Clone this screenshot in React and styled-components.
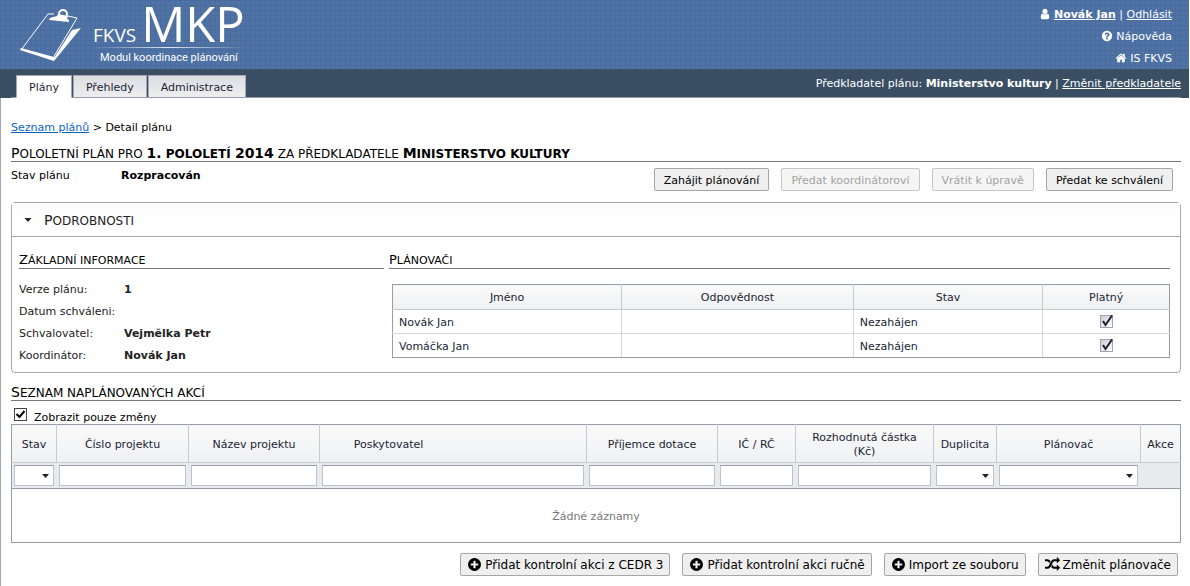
import React from 'react'
import styled, { createGlobalStyle } from 'styled-components'

const ICONS = {
  user: 'M1536 1399q0 109-62.500 187t-150.500 78h-854q-88 0-150.500-78t-62.500-187q0-85 8.500-160.500t31.500-152 58.500-131 94-89 134.500-34.500q131 128 313 128t313-128q76 0 134.500 34.500t94 89 58.500 131 31.500 152 8.500 160.500zm-256-887q0 159-112.500 271.500t-271.500 112.500-271.500-112.500-112.500-271.500 112.500-271.500 271.500-112.500 271.500 112.500 112.500 271.500z',
  help: 'M1024 1376v-192q0-14-9-23t-23-9h-192q-14 0-23 9t-9 23v192q0 14 9 23t23 9h192q14 0 23-9t9-23zm256-672q0-88-55.500-163t-138.500-116-170-41q-243 0-371 213-15 24 8 42l132 100q7 6 19 6 16 0 25-12 53-68 86-92 34-24 86-24 48 0 85.500 26t37.500 59q0 38-20 61t-68 45q-63 28-115.500 86.500t-52.500 125.500v36q0 14 9 23t23 9h192q14 0 23-9t9-23q0-19 21.500-49.500t54.500-49.500q32-18 49-28.500t46-35 44.500-48 28-60.500 12.500-81zm384 192q0 209-103 385.500t-279.500 279.500-385.500 103-385.500-103-279.500-279.500-103-385.500 103-385.500 279.500-279.500 385.500-103 385.500 103 279.500 279.500 103 385.500z',
  home: 'M1472 992v480q0 26-19 45t-45 19h-384v-384h-256v384h-384q-26 0-45-19t-19-45v-480q0-1 .5-3t.5-3l575-474 575 474q1 2 1 6zm223-69l-62 74q-8 9-21 11h-3q-13 0-21-7l-692-577-692 577q-12 8-24 7-13-2-21-11l-62-74q-8-10-7-23.500t11-21.500l719-599q32-26 76-26t76 26l244 204v-195q0-14 9-23t23-9h192q14 0 23 9t9 23v408l219 182q10 8 11 21.500t-7 23.500z',
  plus: 'M1344 960v-128q0-26-19-45t-45-19h-256v-256q0-26-19-45t-45-19h-128q-26 0-45 19t-19 45v256h-256q-26 0-45 19t-19 45v128q0 26 19 45t45 19h256v256q0 26 19 45t45 19h128q26 0 45-19t19-45v-256h256q26 0 45-19t19-45zm320-64q0 209-103 385.500t-279.500 279.500-385.500 103-385.500-103-279.500-279.500-103-385.500 103-385.500 279.500-279.500 385.500-103 385.500 103 279.500 279.500 103 385.500z',
  random: 'M666 481q-60 92-137 273-22-45-37-72.500t-40.500-63.500-51-56.500-63-35-81.500-14.500h-224q-14 0-23-9t-9-23v-192q0-14 9-23t23-9h224q250 0 410 225zm1126 799q0 14-9 23l-320 320q-9 9-23 9-13 0-22.500-9.500t-9.500-22.500v-192q-32 0-85 .5t-81 1-73-1-71-5-64-10.500-63-18.500-58-28.500-59-40-55-53.500-56-69.500q59-93 136-273 22 45 37 72.500t40.500 63.500 51 56.500 63 35 81.500 14.500h256v-192q0-14 9-23t23-9q12 0 24 10l319 319q9 9 9 23zm0-896q0 14-9 23l-320 320q-9 9-23 9-13 0-22.500-9.500t-9.500-22.500v-192h-256q-48 0-87 15t-69 45-51 61.500-45 77.500q-32 62-78 171-29 66-49.500 111t-54 105-64 100-74 83-90 68.500-106.500 42-128 16.500h-224q-14 0-23-9t-9-23v-192q0-14 9-23t23-9h224q48 0 87-15t69-45 51-61.500 45-77.500q32-62 78-171 29-66 49.500-111t54-105 64-100 74-83 90-68.500 106.500-42 128-16.500h256v-192q0-14 9-23t23-9q12 0 24 10l319 319q9 9 9 23z',
}

const Icon = ({ name, size }) => (
  <Glyph width={size} height={size} viewBox="0 0 1792 1792" aria-hidden="true">
    <path d={ICONS[name]} />
  </Glyph>
)

const Check = ({ plain, ...rest }) => (
  <CheckWrap>
    <CheckInput type="checkbox" defaultChecked $plain={plain} {...rest} />
    <CheckMark viewBox="0 0 13 13" $plain={plain}>
      <path d={plain ? 'M2.500 6 L5.500 9 L10.500 3' : 'M3 6 L5.500 10 L12 0.500'} />
    </CheckMark>
  </CheckWrap>
)

const Combo = ({ label }) => (
  <ComboWrap>
    <FilterSelect aria-label={label}>
      <option value=""></option>
    </FilterSelect>
    <Caret width="7" height="4" viewBox="0 0 7 4">
      <path d="M0 0 H7 L3.500 4 Z" />
    </Caret>
  </ComboWrap>
)

const info = [
  ['Verze plánu:', '1'],
  ['Datum schváleni:', ''],
  ['Schvalovatel:', 'Vejmělka Petr'],
  ['Koordinátor:', 'Novák Jan'],
]

const planners = ['Novák Jan', 'Vomáčka Jan']

const columns = [
  { name: 'Stav', width: 45, filter: 'select' },
  { name: 'Číslo projektu', width: 132, filter: 'text' },
  { name: 'Název projektu', width: 131, filter: 'text' },
  { name: 'Poskytovatel', filter: 'text', half: true },
  { name: 'Příjemce dotace', width: 131, filter: 'text' },
  { name: 'IČ / RČ', width: 78, filter: 'text' },
  { name: 'Rozhodnutá částka (Kč)', width: 138, filter: 'text' },
  { name: 'Duplicita', width: 63, filter: 'select' },
  { name: 'Plánovač', width: 144, filter: 'select' },
  { name: 'Akce', width: 40 },
]

const App = () => {
  return (
    <Page>
      <GlobalStyle />
      <Header>
        <Banner>
          <Logo>
            <Clipboard viewBox="0 0 64 56">
              <path
                d="M34 6 L28 6 L1 42 M48 8 L57 10 L33 50"
                fill="none"
                stroke="#fff"
                strokeWidth="1"
              />
              <path d="M1 40 L34 49 L34 53 L0 42 Z" fill="#fff" />
              <path d="M61 20 L52 22 L34 50 L34 53 Z" fill="#fff" />
              <path d="M29 12 L30 10 L37 8 L38 6 L48 8 L47 11 L49 12 L49 14 Z" fill="#fff" />
              <ellipse cx="43" cy="6" rx="4" ry="4" fill="none" stroke="#fff" strokeWidth="2" />
            </Clipboard>
            <div>
              <LogoTop>
                <LogoSmall>FKVS</LogoSmall>
                <LogoBig>MKP</LogoBig>
              </LogoTop>
              <LogoSub>Modul koordinace plánování</LogoSub>
            </div>
          </Logo>
          <UserMenu>
            <div>
              <Icon name="user" size={12} />
              <UserLink href="#profil" $bold>Novák Jan</UserLink> | <UserLink href="#odhlasit">Odhlásit</UserLink>
            </div>
            <PlainLink href="#napoveda">
              <Icon name="help" size={12} />
              Nápověda
            </PlainLink>
            <PlainLink href="#fkvs">
              <Icon name="home" size={12} />
              IS FKVS
            </PlainLink>
          </UserMenu>
        </Banner>
        <NavBar>
          <Tabs>
            <Tab href="#plany" $active>Plány</Tab>
            <Tab href="#prehledy">Přehledy</Tab>
            <Tab href="#administrace">Administrace</Tab>
          </Tabs>
          <Submitter>
            Předkladatel plánu: <b>Ministerstvo kultury</b> | <UserLink href="#zmenit">Změnit předkladatele</UserLink>
          </Submitter>
        </NavBar>
      </Header>

      <Content>
        <Breadcrumb>
          <a href="#seznam">Seznam plánů</a> &gt; Detail plánu
        </Breadcrumb>
        <Title>
          Pololetní plán pro <strong>1. pololetí <Digits>2014</Digits></strong> za předkladatele{' '}
          <strong>Ministerstvo kultury</strong>
        </Title>
        <StateRow>
          <State>
            <StateLabel>Stav plánu</StateLabel>
            <b>Rozpracován</b>
          </State>
          <TopButtons>
            <Button>Zahájit plánování</Button>
            <Button disabled>Předat koordinátorovi</Button>
            <Button disabled>Vrátit k úpravě</Button>
            <Button>Předat ke schválení</Button>
          </TopButtons>
        </StateRow>

        <Panel>
          <PanelHead>
            <Caret width="8" height="4" viewBox="0 0 7 4" $inline>
              <path d="M0 0 H7 L3.500 4 Z" />
            </Caret>
            <PanelTitle>Podrobnosti</PanelTitle>
          </PanelHead>
          <PanelBody>
            <section>
              <SubTitle>Základní informace</SubTitle>
              <InfoList>
                {info.map(([label, value]) => (
                  <React.Fragment key={label}>
                    <dt>{label}</dt>
                    <dd>{value}</dd>
                  </React.Fragment>
                ))}
              </InfoList>
            </section>
            <section>
              <SubTitle>Plánovači</SubTitle>
              <PlannerWrap>
                <PlannerTable>
                  <colgroup>
                    <Col $width="29.5%" />
                    <Col $width="29.8%" />
                    <Col $width="24.4%" />
                    <Col />
                  </colgroup>
                  <thead>
                    <tr>
                      <th>Jméno</th>
                      <th>Odpovědnost</th>
                      <th>Stav</th>
                      <th>Platný</th>
                    </tr>
                  </thead>
                  <tbody>
                    {planners.map((name) => (
                      <tr key={name}>
                        <td>{name}</td>
                        <td></td>
                        <td>Nezahájen</td>
                        <CenterCell>
                          <Check aria-label={`Platný ${name}`} />
                        </CenterCell>
                      </tr>
                    ))}
                  </tbody>
                </PlannerTable>
              </PlannerWrap>
            </section>
          </PanelBody>
        </Panel>

        <ListTitle>Seznam naplánovaných akcí</ListTitle>
        <OnlyChanges>
          <Check plain id="zmeny" />
          <label htmlFor="zmeny">Zobrazit pouze změny</label>
        </OnlyChanges>

        <ActionTable>
          <colgroup>
            {columns.map((c) => (
              <Col key={c.name} $width={c.width && `${c.width}px`} />
            ))}
          </colgroup>
          <thead>
            <tr>
              {columns.map((c) => (
                <th key={c.name}>{c.half ? <HalfLabel>{c.name}</HalfLabel> : c.name}</th>
              ))}
            </tr>
            <FilterRow>
              {columns.map((c) => (
                <td key={c.name}>
                  {c.filter === 'text' && <FilterInput type="text" aria-label={c.name} />}
                  {c.filter === 'select' && <Combo label={c.name} />}
                </td>
              ))}
            </FilterRow>
          </thead>
          <tbody>
            <tr>
              <EmptyCell colSpan={columns.length}>Žádné záznamy</EmptyCell>
            </tr>
          </tbody>
        </ActionTable>

        <BottomButtons>
          <IconButton><Icon name="plus" size={15} />Přidat kontrolní akci z CEDR 3</IconButton>
          <IconButton><Icon name="plus" size={15} />Přidat kontrolní akci ručně</IconButton>
          <IconButton><Icon name="plus" size={15} />Import ze souboru</IconButton>
          <IconButton><Icon name="random" size={15} />Změnit plánovače</IconButton>
        </BottomButtons>
      </Content>
    </Page>
  )
}

const GlobalStyle = createGlobalStyle`
* {
  box-sizing: border-box;
}
body {
  margin: 0;
  background: #fff;
  color: #000;
  font-family: Verdana, "DejaVu Sans", sans-serif;
  font-size: 11px;
  line-height: 14px;
}
`

const Page = styled.div`
display: flex;
flex-direction: column;
min-height: 100vh;
`

const Header = styled.header`
margin-right: 1px;
color: #fff;
`

const Banner = styled.div`
display: flex;
justify-content: space-between;
height: 69px;
padding: 0 17px 0 20px;
background-color: #5073a6;
background-image:
  linear-gradient(to right, #496b9e 1px, transparent 1px),
  linear-gradient(to bottom, #496b9e 1px, transparent 1px);
background-size: 5px 5px;
`

const Logo = styled.div`
display: flex;
gap: 9px;
`

const Clipboard = styled.svg`
width: 64px;
height: 56px;
margin-top: 8px;
`

const LogoTop = styled.div`
display: flex;
align-items: baseline;
gap: 5px;
height: 48px;
line-height: 46px;
font-family: "Open Sans", "Noto Sans", sans-serif;
border-bottom: 1px solid;
border-image: linear-gradient(to right, transparent, #dfe7f2 50%, transparent) 1;
`

const LogoSmall = styled.span`
font-size: 19px;
`

const LogoBig = styled.span`
font-size: 49px;
`

const LogoSub = styled.div`
padding-left: 7px;
font-family: Roboto, "Noto Sans", sans-serif;
font-size: 11px;
line-height: 19px;
`

const UserMenu = styled.div`
display: flex;
flex-direction: column;
align-items: flex-end;
padding-top: 4px;
line-height: 22px;
`

const Glyph = styled.svg`
margin-right: 3px;
fill: currentColor;
vertical-align: -2px;
`

const PlainLink = styled.a`
color: #fff;
text-decoration: none;
`

const UserLink = styled.a`
color: #fff;
font-weight: ${(p) => (p.$bold ? 'bold' : 'normal')};
text-decoration: underline;
`

const NavBar = styled.div`
display: flex;
justify-content: space-between;
height: 29px;
padding: 0 8px 0 11px;
background: #3a4f64;
`

const Tabs = styled.nav`
display: flex;
flex: 1;
gap: 1px;
padding: 6px 0 0 5px;
border-bottom: 1px solid #9a9ba8;
`

const Tab = styled.a`
height: 23px;
padding: 0 12px;
border: 1px solid #a5a6b2;
border-bottom-color: ${(p) => (p.$active ? '#fff' : '#9a9ba8')};
background: ${(p) => (p.$active ? '#fff' : 'linear-gradient(to bottom, #dcdde2, #eeeef0)')};
color: #201f35;
line-height: 24px;
text-decoration: none;
`

const Submitter = styled.div`
height: 29px;
border-bottom: 1px solid #9a9ba8;
line-height: 30px;
`

const Content = styled.main`
flex: 1;
padding: 23px 9px 9px 10px;
border-left: 1px solid #a5a6b2;
`

const Breadcrumb = styled.nav`
a {
  color: #0b63c5;
}
`

const Heading = styled.h2`
margin: 0;
border-bottom: 1px solid #777;
font-size: 12px;
font-weight: normal;
line-height: 14px;
text-transform: uppercase;
&::first-letter {
  font-size: 14px;
  line-height: 1;
}
`

const Title = styled(Heading)`
margin-top: 11px;
strong {
  display: inline-block;
}
strong::first-letter {
  font-size: 14px;
  line-height: 1;
}
`

const Digits = styled.span`
font-size: 14px;
line-height: 1;
`

const StateRow = styled.div`
display: flex;
justify-content: space-between;
padding: 6px 8px 0 0;
`

const State = styled.div`
display: flex;
line-height: 16px;
`

const StateLabel = styled.span`
width: 110px;
`

const TopButtons = styled.div`
display: flex;
gap: 12px;
`

const Button = styled.button`
height: 23px;
padding: 2px 9px 0;
border: 1px solid #a6a6a6;
border-radius: 2px;
background: #efefef;
color: #000;
font: inherit;
&:disabled {
  border-color: #c6c6c6;
  background: #f5f5f5;
  color: #a3a3a3;
}
`

const IconButton = styled(Button)`
display: flex;
align-items: center;
padding: 0 6px;
font-size: 12px;
`

const Panel = styled.section`
margin-top: 11px;
border: 1px solid #a8a8a8;
border-radius: 4px;
`

const PanelHead = styled.div`
display: flex;
align-items: center;
gap: 12px;
height: 34px;
padding-left: 12px;
border-bottom: 1px solid #a8a8a8;
background: linear-gradient(to bottom, #fcfcfc, #fff);
color: #222;
`

const PanelTitle = styled(Heading)`
padding-top: 2px;
border: 0;
`

const PanelBody = styled.div`
display: grid;
grid-template-columns: 365fr 781fr;
gap: 5px;
padding: 16px 10px 5px 7px;
color: #222;
`

const SubTitle = styled(Heading)`
color: #000;
font-size: 11px;
&::first-letter {
  font-size: 13px;
}
`

const InfoList = styled.dl`
display: grid;
grid-template-columns: 105px 1fr;
grid-auto-rows: 22px;
margin: 10px 0 0;
line-height: 22px;
dd {
  margin: 0;
  font-weight: bold;
}
`

const PlannerWrap = styled.div`
padding: 15px 0 0 3px;
`

const Table = styled.table`
width: 100%;
table-layout: fixed;
border-collapse: collapse;
border: 1px solid #9a9ba8;
color: #201f35;
th {
  border: 1px solid #c8c9d2;
  border-top-color: #9a9ba8;
  background: linear-gradient(to bottom, #fafafa, #eff0f2);
  font-weight: normal;
}
th:first-child, td:first-child {
  border-left-color: #9a9ba8;
}
th:last-child, td:last-child {
  border-right-color: #9a9ba8;
}
`

const PlannerTable = styled(Table)`
th {
  height: 25px;
  padding: 2px 0 0;
}
td {
  height: 24px;
  padding: 0 6px;
  border-width: 1px;
  border-style: solid;
  border-top-color: #d6d7dd;
  border-bottom-color: #d6d7dd;
}
td + td {
  border-left-color: #d6d7dd;
}
td:not(:last-child) {
  padding-top: 2px;
  border-right-color: #d6d7dd;
}
tbody tr:last-child td {
  border-bottom-color: #9a9ba8;
}
`

const ActionTable = styled(Table)`
th {
  height: 38px;
  padding: 2px 4px 0;
}
`

const Col = styled.col`
width: ${(p) => p.$width || 'auto'};
`

const CenterCell = styled.td`
text-align: center;
`

const HalfLabel = styled.div`
width: 50%;
`

const FilterRow = styled.tr`
background: #e9eaee;
border-bottom: 1px solid #9a9ba8;
td {
  height: 26px;
  padding: 0 3px 0 2px;
}
`

const FilterInput = styled.input`
display: block;
width: 100%;
height: 21px;
padding: 0 4px;
border: 1px solid #c0c1ca;
border-top-color: #9a9ba8;
border-radius: 0;
background: #fff;
font: inherit;
`

const FilterSelect = styled(FilterInput).attrs({ as: 'select' })`
appearance: none;
`

const ComboWrap = styled.div`
position: relative;
`

const Caret = styled.svg`
position: ${(p) => (p.$inline ? 'static' : 'absolute')};
top: 9px;
right: 5px;
fill: #222;
pointer-events: none;
`

const EmptyCell = styled.td`
height: 54px;
padding: 2px 0 0;
color: #777;
text-align: center;
`

const CheckWrap = styled.span`
display: inline-block;
position: relative;
width: 13px;
height: 13px;
vertical-align: middle;
`

const CheckInput = styled.input`
appearance: none;
display: block;
width: 13px;
height: 13px;
margin: 0;
border: 1px solid ${(p) => (p.$plain ? '#444' : '#a0a1ad')};
background: ${(p) => (p.$plain ? '#fff' : 'linear-gradient(135deg, #ccced6, #fff)')};
`

const CheckMark = styled.svg`
position: absolute;
inset: 0;
overflow: visible;
fill: none;
stroke: ${(p) => (p.$plain ? '#000' : '#201f35')};
stroke-width: 2;
pointer-events: none;
`

const ListTitle = styled(Heading)`
margin-top: 12px;
`

const OnlyChanges = styled.div`
display: flex;
align-items: baseline;
gap: 7px;
height: 23px;
padding: 7px 0 0 3px;
`

const BottomButtons = styled.div`
display: flex;
justify-content: flex-end;
gap: 12px;
padding: 10px 3px 0 0;
`

export default App
